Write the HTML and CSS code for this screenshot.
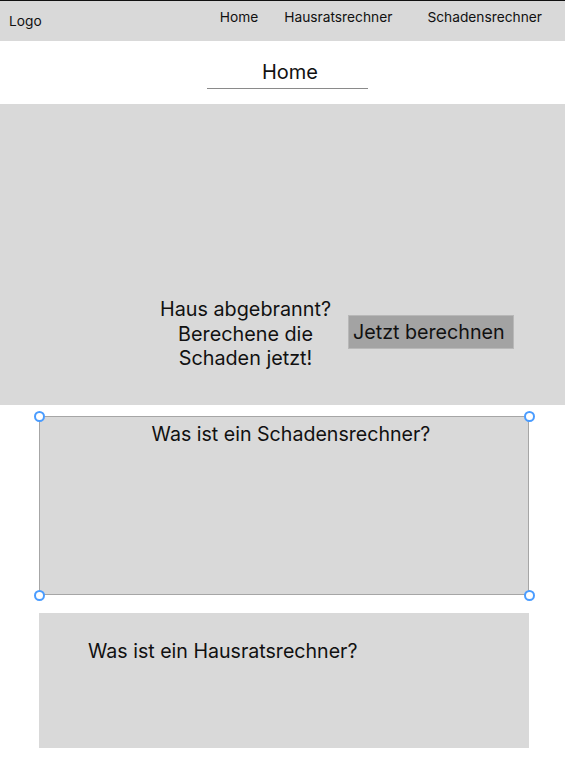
FILE: index.html
```html
<!DOCTYPE html>
<html lang="de">
<head>
<meta charset="utf-8">
<title>Home</title>
<link rel="stylesheet" href="styles.css">
</head>
<body>
  <header class="topbar">
    <div class="logo">Logo</div>
    <nav class="nav">
      <a class="nav-link">Home</a>
      <a class="nav-link">Hausratsrechner</a>
      <a class="nav-link nav-last">Schadensrechner</a>
    </nav>
  </header>
  <section class="page-title">
    <h1 class="title">Home</h1>
    <div class="title-line"></div>
  </section>
  <section class="hero">
    <div class="hero-row">
      <p class="hero-text">Haus abgebrannt?<br>Berechene die<br>Schaden jetzt!</p>
      <button class="cta">Jetzt berechnen</button>
    </div>
  </section>
  <section class="card card-selected">
    <h2 class="card-title card-title-center">Was ist ein Schadensrechner?</h2>
    <span class="handle h-tl"></span>
    <span class="handle h-tr"></span>
    <span class="handle h-bl"></span>
    <span class="handle h-br"></span>
  </section>
  <section class="card card-plain">
    <h2 class="card-title card-title-left">Was ist ein Hausratsrechner?</h2>
  </section>
</body>
</html>
```
FILE: styles.css
```css
* { box-sizing: border-box; }
html, body { margin: 0; padding: 0; }
body {
  background: #ffffff;
  font-family: Inter, "Noto Sans", sans-serif;
  color: #111;
  width: 565px;
  height: 760px;
  overflow: hidden;
}
.topbar {
  border-top: 1px solid #111;
  background: #d9d9d9;
  height: 41px;
  display: flex;
  align-items: flex-start;
  justify-content: space-between;
  padding: 0 23px 0 9px;
}
.logo {
  font-size: 13.75px;
  line-height: 16px;
  margin-top: 12px;
}
.nav {
  display: flex;
  gap: 26px;
  margin-top: 8px;
}
.nav-link {
  font-size: 13.75px;
  line-height: 16px;
  color: #111;
}
.nav-last { margin-left: 9px; }
.page-title {
  height: 63px;
  display: flex;
  flex-direction: column;
  align-items: center;
}
.title {
  font-weight: 400;
  font-size: 20px;
  line-height: 24px;
  margin: 19px 0 0 15px;
}
.title-line {
  width: 161px;
  height: 1px;
  background: #8a8a8a;
  margin: 4px 0 0 10px;
}
.hero {
  background: #d9d9d9;
  height: 301px;
  padding: 193px 0 0 159px;
}
.hero-row {
  display: flex;
  align-items: center;
  gap: 16px;
}
.hero-text {
  margin: 0;
  text-align: center;
  font-size: 19.8px;
  line-height: 24.5px;
  width: 173px;
}
.cta {
  font-family: Inter, "Noto Sans", sans-serif;
  background: #a3a3a3;
  border: 1px solid #b8b8b8;
  color: #111;
  font-size: 19.7px;
  text-align: left;
  width: 166px;
  height: 34px;
  padding: 0 0 0 4px;
  margin-bottom: 3px;
}
.card {
  position: relative;
  background: #d9d9d9;
  margin-left: 39px;
  width: 490px;
}
.card-selected {
  margin-top: 11px;
  height: 179px;
  border: 1.5px solid #a6a6a6;
  padding: 5px 0 0 14px;
}
.card-plain {
  margin-top: 18px;
  height: 135px;
  padding: 26px 0 0 49px;
}
.card-title {
  font-weight: 400;
  font-size: 19.6px;
  line-height: 24px;
  margin: 0;
}
.card-title-center { text-align: center; }
.handle {
  position: absolute;
  width: 11px;
  height: 11px;
  border-radius: 50%;
  border: 2px solid #4a9cff;
  background: #fff;
}
.h-tl { left: -6.5px; top: -6.5px; }
.h-tr { right: -6.5px; top: -6.5px; }
.h-bl { left: -6.5px; bottom: -6.5px; }
.h-br { right: -6.5px; bottom: -6.5px; }
```
